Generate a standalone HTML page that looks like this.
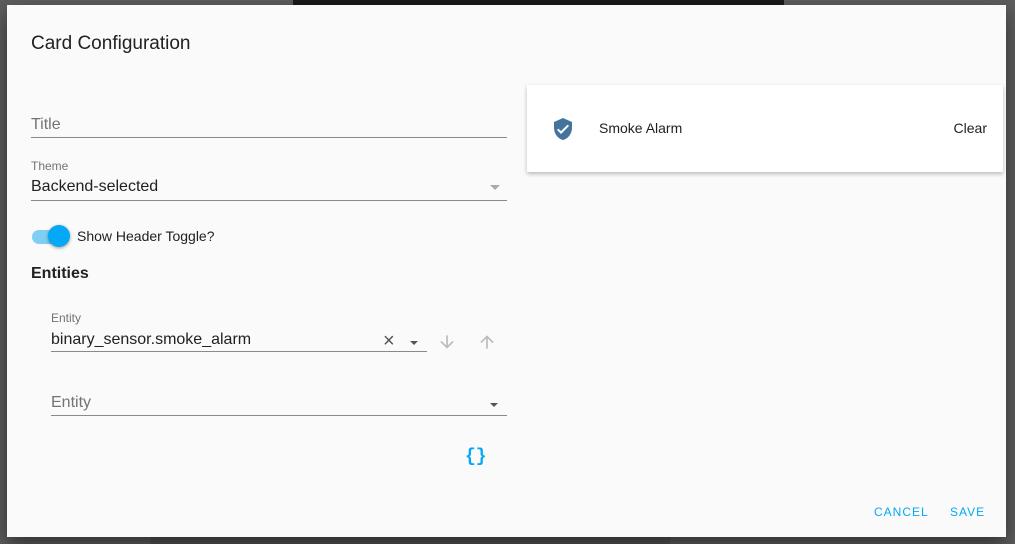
<!DOCTYPE html>
<html><head><style>
*{margin:0;padding:0;box-sizing:border-box}
body{width:1015px;height:544px;background:#5e5e5e;font-family:"Liberation Sans",Arial,sans-serif;position:relative;overflow:hidden;color:#212121}
.a{position:absolute}
.dlg{left:7px;top:5px;width:999px;height:532px;background:#fafafa;box-shadow:0 8px 20px rgba(0,0,0,.5)}
.line{height:1px;background:#8a8a8a}
.lab{color:#737373}
</style></head><body>
<div class="a" style="left:293px;top:0;width:491px;height:5px;background:#1a1a1a"></div>
<div class="a" style="left:150px;top:537px;width:520px;height:7px;background:#555"></div>
<div class="a dlg">
<div class="a" style="left:24px;top:28px;font-size:19px;color:#212121">Card Configuration</div>
<div class="a lab" style="left:24px;top:111px;font-size:16px">Title</div>
<div class="a line" style="left:24px;top:132px;width:476px"></div>
<div class="a lab" style="left:24px;top:154px;font-size:12px">Theme</div>
<div class="a" style="left:24px;top:173px;font-size:16px">Backend-selected</div>
<div class="a" style="left:483px;top:180px;border:5px solid transparent;border-top-color:#aaa;border-bottom:0"></div>
<div class="a line" style="left:24px;top:195px;width:476px"></div>
<div class="a" style="left:25px;top:225px;width:32px;height:14px;border-radius:7px;background:#7fcff5"></div>
<div class="a" style="left:41px;top:220px;width:22px;height:22px;border-radius:50%;background:#03a9f4;box-shadow:0 1px 3px rgba(0,0,0,.4)"></div>
<div class="a" style="left:70px;top:223px;font-size:14px">Show Header Toggle?</div>
<div class="a" style="left:24px;top:260px;font-size:16px;font-weight:bold">Entities</div>
<div class="a lab" style="left:44px;top:306px;font-size:12px">Entity</div>
<div class="a" style="left:44px;top:326px;font-size:16px">binary_sensor.smoke_alarm</div>
<div class="a" style="left:376px;top:325px;font-size:20px;color:#555">×</div>
<div class="a" style="left:403px;top:336px;border:4px solid transparent;border-top-color:#555;border-bottom:0"></div>
<div class="a line" style="left:44px;top:346px;width:376px"></div>
<svg class="a" style="left:430px;top:327px" width="20" height="20" viewBox="0 0 24 24"><path d="M20 12l-1.41-1.41L13 16.17V4h-2v12.17l-5.58-5.59L4 12l8 8 8-8z" fill="#bbb"/></svg>
<svg class="a" style="left:470px;top:327px" width="20" height="20" viewBox="0 0 24 24"><path d="M4 12l1.41 1.41L11 7.83V20h2V7.83l5.58 5.59L20 12l-8-8-8 8z" fill="#bbb"/></svg>
<div class="a lab" style="left:44px;top:389px;font-size:16px">Entity</div>
<div class="a" style="left:483px;top:398px;border:4px solid transparent;border-top-color:#555;border-bottom:0"></div>
<div class="a line" style="left:44px;top:410px;width:456px"></div>
<div class="a" style="left:458px;top:442px;font-size:18px;font-weight:bold;color:#03a9f4;font-family:'Liberation Mono',monospace">{}</div>
<div class="a" style="left:520px;top:80px;width:476px;height:87px;background:#fff;box-shadow:0 2px 4px rgba(0,0,0,.25)">
<svg class="a" style="left:24px;top:32px" width="24" height="24" viewBox="0 0 24 24"><path d="M12 1L3 5v6c0 5.55 3.84 10.74 9 12 5.16-1.26 9-6.45 9-12V5l-9-4zm-2 16l-4-4 1.41-1.41L10 14.17l6.59-6.59L18 9l-8 8z" fill="#44739e"/></svg>
<div class="a" style="left:72px;top:35px;font-size:14px">Smoke Alarm</div>
<div class="a" style="right:16px;top:35px;font-size:14px">Clear</div>
</div>
<div class="a" style="left:867px;top:500px;font-size:12px;letter-spacing:1px;color:#03a9f4">CANCEL</div>
<div class="a" style="left:943px;top:500px;font-size:12px;letter-spacing:1px;color:#03a9f4">SAVE</div>
</div>
</body></html>
